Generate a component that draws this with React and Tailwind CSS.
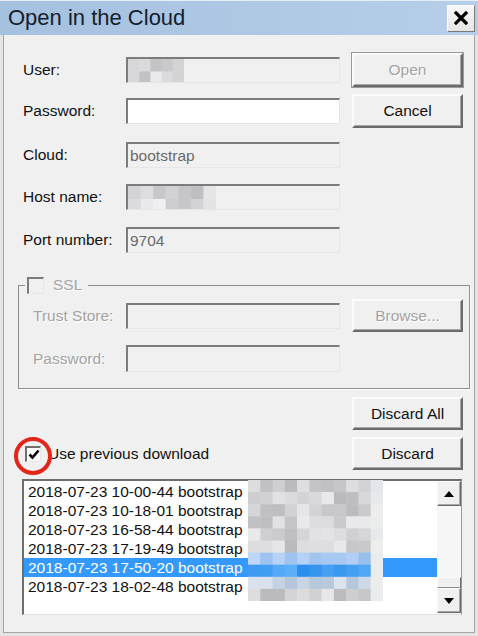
import React from "react";

// deterministic pseudo-random for the redaction mosaics
const rnd = (seed) => {
  let s = seed;
  return () => {
    s = (s * 9301 + 49297) % 233280;
    return s / 233280;
  };
};

const Mosaic = ({ w, h, cols, rows, seed, tint }) => {
  const r = rnd(seed);
  const cw = w / cols;
  const rh = h / rows;
  const cells = [];
  for (let y = 0; y < rows; y++) {
    for (let x = 0; x < cols; x++) {
      const v = r();
      cells.push(
        <rect
          key={`${x}-${y}`}
          x={x * cw}
          y={y * rh}
          width={cw + 0.5}
          height={rh + 0.5}
          fill={tint ? tint(x, y, v) : `rgb(${Math.round(190 + v * 50)},${Math.round(190 + v * 50)},${Math.round(192 + v * 50)})`}
        />
      );
    }
  }
  return (
    <svg width={w} height={h} className="block">
      {cells}
    </svg>
  );
};

const listTint = (x, y, v) => {
  const g = Math.round(185 + v * 50);
  if (x === 10) return `rgb(${225 + Math.round(v * 15)},${230 + Math.round(v * 10)},236)`;
  if (y === 6) return `rgb(${Math.round(150 + v * 40)},${Math.round(190 + v * 25)},${Math.round(235 + v * 15)})`;
  if (y === 7) return `rgb(${Math.round(40 + v * 60)},${Math.round(140 + v * 40)},${Math.round(235 + v * 15)})`;
  if (y === 8) return `rgb(${Math.round(180 + v * 40)},${Math.round(198 + v * 30)},${Math.round(218 + v * 20)})`;
  return `rgb(${g},${g},${g + 2})`;
};

const Label = ({ children, w = "w-[103px]", disabled }) => (
  <span
    className={`${w} shrink-0 ${disabled ? "text-[#a3a3a3] [text-shadow:1px_1px_0_#ffffff]" : "text-[#111]"}`}
  >
    {children}
  </span>
);

const Field = ({ value, white, h = "h-[26px]", children }) => (
  <div
    className={`relative w-[214px] ${h} shrink-0 border-t-2 border-l-2 border-b border-r border-t-[#7c7c7c] border-l-[#7c7c7c] border-b-[#e6e6e6] border-r-[#e6e6e6] ${white ? "bg-white" : "bg-[#f0f0f0]"} flex items-center pl-[2px] text-[#6a6a6a] overflow-hidden`}
  >
    {value}
    {children}
  </div>
);

const Btn = ({ children, disabled, def, h = "h-[34px]" }) => (
  <button
    className={`ml-[12px] w-[111px] ${h} shrink-0 bg-[#f0f0f0] border-2 border-t-[#fbfbfb] border-l-[#fbfbfb] border-b-[#6b6b6b] border-r-[#6b6b6b] shadow-[inset_-1px_-1px_0_#a8a8a8] ${def ? "outline outline-1 outline-[#9a9a9a]" : ""} ${disabled ? "text-[#a3a3a3] [text-shadow:1px_1px_0_#ffffff]" : "text-[#111]"}`}
  >
    {children}
  </button>
);

const rows = [
  "2018-07-23 10-00-44 bootstrap",
  "2018-07-23 10-18-01 bootstrap",
  "2018-07-23 16-58-44 bootstrap",
  "2018-07-23 17-19-49 bootstrap",
  "2018-07-23 17-50-20 bootstrap",
  "2018-07-23 18-02-48 bootstrap",
];

const Arrow = ({ up }) => (
  <svg width="10" height="6" viewBox="0 0 10 6">
    <polygon points={up ? "5,0 10,6 0,6" : "0,0 10,0 5,6"} fill="#000" />
  </svg>
);

const ScrollBtn = ({ up }) => (
  <div className="h-[25px] w-[24px] bg-[#f0f0f0] border border-t-[#fbfbfb] border-l-[#fbfbfb] border-b-[#6b6b6b] border-r-[#6b6b6b] shadow-[inset_-1px_-1px_0_#a8a8a8] flex items-center justify-center">
    <Arrow up={up} />
  </div>
);

export default function App() {
  return (
    <div className="w-[478px] h-[636px] bg-[#f0f0f0] flex flex-col font-['Liberation_Sans',Arial,sans-serif] text-[15.5px] leading-none overflow-hidden">
      {/* Title bar */}
      <div className="h-[35px] shrink-0 flex items-center justify-between pl-[8px] pr-[3px] bg-gradient-to-r from-[#a5c1e0] to-[#b6cee8] border-t border-[#e8eef6]">
        <span className="text-[22px] text-[#15202c]">Open in the Cloud</span>
        <div className="w-[28px] h-[27px] flex items-center justify-center bg-gradient-to-b from-[#f8f8f8] to-[#e4e4e4] border border-t-[#ffffff] border-l-[#ffffff] border-b-[#7a7a7a] border-r-[#7a7a7a]">
          <svg width="14" height="14" viewBox="0 0 14 14">
            <path d="M2 2 L12 12 M12 2 L2 12" stroke="#000" strokeWidth="3.2" strokeLinecap="square" />
          </svg>
        </div>
      </div>

      {/* Body */}
      <div className="flex-1 flex flex-col border-x-[3px] border-b-[3px] border-[#e4e4e4]">
        <div className="flex-1 flex flex-col border-x border-b border-[#a3a3a3]">
          <div className="flex items-center h-[34px] mt-[18px] pl-[19px]">
            <Label>User:</Label>
            <Field>
              <div className="absolute left-0 top-0">
                <Mosaic w={56} h={25} cols={5} rows={2} seed={7} />
              </div>
            </Field>
            <Btn disabled def>Open</Btn>
          </div>

          <div className="flex items-center h-[34px] mt-[7px] pl-[19px]">
            <Label>Password:</Label>
            <Field white />
            <Btn>Cancel</Btn>
          </div>

          <div className="flex items-center h-[26px] mt-[14px] pl-[19px]">
            <Label>Cloud:</Label>
            <Field value="bootstrap" />
          </div>

          <div className="flex items-center h-[26px] mt-[16px] pl-[19px]">
            <Label>Host name:</Label>
            <Field>
              <div className="absolute left-0 top-0">
                <Mosaic w={88} h={26} cols={7} rows={2} seed={31} />
              </div>
            </Field>
          </div>

          <div className="flex items-center h-[26px] mt-[17px] pl-[19px]">
            <Label>Port number:</Label>
            <Field value="9704" />
          </div>

          {/* SSL group */}
          <fieldset className="mt-[23px] ml-[14px] w-[452px] border border-[#8e8e8e] shadow-[1px_1px_0_#ffffff] pb-[16px]">
            <legend className="ml-[6px] pl-[2px] pr-[6px] flex items-center h-[18px]">
              <span className="w-[17px] h-[17px] border-t-2 border-l-2 border-b border-r border-t-[#7c7c7c] border-l-[#7c7c7c] border-b-[#e6e6e6] border-r-[#e6e6e6] bg-[#f0f0f0]" />
              <span className="ml-[9px] text-[#a3a3a3] [text-shadow:1px_1px_0_#ffffff]">SSL</span>
            </legend>
            <div className="flex items-center h-[33px] mt-[5px] pl-[14px]">
              <Label w="w-[93px]" disabled>Trust Store:</Label>
              <Field />
              <Btn disabled h="h-[33px]">Browse...</Btn>
            </div>
            <div className="flex items-center h-[27px] mt-[13px] pl-[14px]">
              <Label w="w-[93px]" disabled>Password:</Label>
              <Field h="h-[27px]" />
            </div>
          </fieldset>

          <div className="flex items-center h-[33px] mt-[8px] pl-[21px] pr-[11px]">
            <div className="ml-auto">
              <Btn h="h-[33px]">Discard All</Btn>
            </div>
          </div>

          <div className="flex items-center h-[33px] mt-[7px] pl-[21px] pr-[11px]">
            <div className="relative w-[16px] h-[16px] border-t-2 border-l-2 border-b border-r border-t-[#6e6e6e] border-l-[#6e6e6e] border-b-[#e6e6e6] border-r-[#e6e6e6] bg-white flex items-center justify-center">
              <svg width="12" height="11" viewBox="0 0 12 11">
                <path d="M1.5 5.5 L4.5 8.5 L10.5 1.5" stroke="#000" strokeWidth="2.6" fill="none" />
              </svg>
              <div className="absolute -left-[13px] -top-[11px] w-[38px] h-[38px] rounded-full border-4 border-[#e2261c]" />
            </div>
            <span className="ml-[7px] text-[#111]">Use previous download</span>
            <div className="ml-auto">
              <Btn h="h-[33px]">Discard</Btn>
            </div>
          </div>

          {/* List */}
          <div className="relative mt-[9px] ml-[18px] w-[440px] h-[136px] flex border-t-2 border-l-2 border-b border-r border-t-[#6e6e6e] border-l-[#6e6e6e] border-b-[#e2e2e2] border-r-[#9a9a9a] bg-white">
            <div className="flex-1 pt-[1px]">
              {rows.map((r, i) => (
                <div
                  key={r}
                  className={`h-[19px] flex items-center pl-[4px] ${i === 4 ? "bg-[#3399ff] text-white" : "text-[#111]"}`}
                >
                  {r}
                </div>
              ))}
            </div>
            <div className="w-[24px] flex flex-col bg-[#f6f6f6] pb-[1px]">
              <ScrollBtn up />
              <div className="flex-1 flex flex-col justify-end">
                <div className="h-[11px] border border-t-[#fbfbfb] border-l-[#fbfbfb] border-b-[#8a8a8a] border-r-[#6b6b6b] bg-[#f0f0f0]" />
              </div>
              <ScrollBtn />
            </div>
            <div className="absolute left-[224px] -top-[1px]">
              <Mosaic w={135} h={121} cols={11} rows={10} seed={113} tint={listTint} />
            </div>
          </div>
        </div>
      </div>
    </div>
  );
}
